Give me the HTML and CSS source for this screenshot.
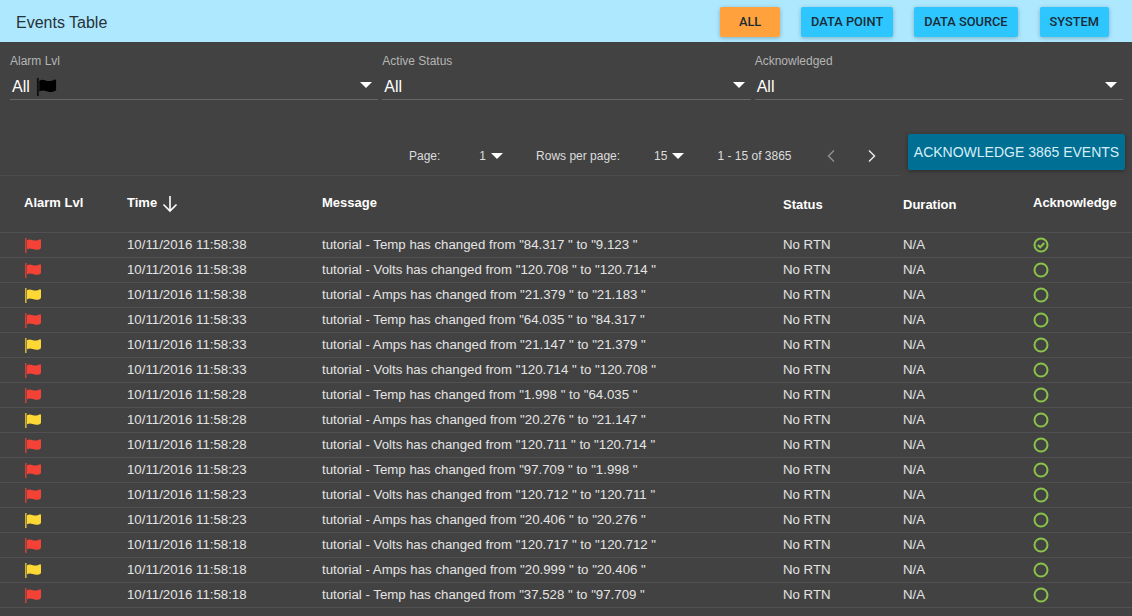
FILE: index.html
```html
<!DOCTYPE html>
<html lang="en">
<head>
    <meta charset="UTF-8">
    <title>Events Table</title>
    <link rel="stylesheet" href="styles.css">
</head>
<body>

    <svg class="icon-defs" width="0" height="0">
        <symbol id="flag" viewBox="0 0 16 15">
            <path opacity="0.75" d="M0 0h1.600v15H0z"/>
            <path d="M2 2.200c1.800 -.9 3.300 -.9 5.200 -.2 2.400 .9 4.200 .8 7.300 -.6 .9 -.4 1.500 0 1.500 .8v7.400c0 .7 -.3 1 -.9 1.300 -2.800 1.200 -4.800 1.100 -7.300 .2 -2 -.8 -3.800 -.8 -5.800 .1z"/>
        </symbol>
    </svg>

    <!-- Top bar -->
    <header class="topbar">
        <h1>Events Table</h1>
        <nav class="type-buttons">
            <button class="type-btn type-all">ALL</button>
            <button class="type-btn">DATA POINT</button>
            <button class="type-btn">DATA SOURCE</button>
            <button class="type-btn type-system">SYSTEM</button>
        </nav>
    </header>

    <!-- Filters -->
    <section class="filters">
        <div class="filter">
            <label>Alarm Lvl</label>
            <div class="select">
                <span>All</span>
                <svg class="filter-flag"><use href="#flag"/></svg>
                <i class="caret"></i>
            </div>
        </div>
        <div class="filter">
            <label>Active Status</label>
            <div class="select"><span>All</span><i class="caret"></i></div>
        </div>
        <div class="filter">
            <label>Acknowledged</label>
            <div class="select"><span>All</span><i class="caret"></i></div>
        </div>
    </section>

    <!-- Pagination -->
    <section class="pager-row">
        <div class="pager">
            <span class="pager-page">Page:</span>
            <span class="pager-num">1</span><i class="caret small"></i>
            <span class="pager-rows">Rows per page:</span>
            <span class="pager-num">15</span><i class="caret small"></i>
            <span class="pager-range">1 - 15 of 3865</span>
            <svg class="chevron prev" viewBox="0 0 10 14"><path d="M8 1.500 2.500 7 8 12.500"/></svg>
            <svg class="chevron" viewBox="0 0 10 14"><path d="M2 1.500 7.500 7 2 12.500"/></svg>
        </div>
        <button class="ack-all">ACKNOWLEDGE 3865 EVENTS</button>
    </section>

    <!-- Events table -->
    <table class="events">
        <thead>
            <tr>
                <th class="col-alarm">Alarm Lvl</th>
                <th class="col-time">
                    <span class="time-head">Time
                        <svg class="sort-arrow" viewBox="0 0 16 18"><path d="M8 1v15M1.500 9.500 8 16l6.500-6.500"/></svg>
                    </span>
                </th>
                <th class="col-message">Message</th>
                <th class="col-status th-low">Status</th>
                <th class="col-duration th-low">Duration</th>
                <th class="col-ack">Acknowledge</th>
            </tr>
        </thead>
        <tbody id="eventRows"></tbody>
    </table>

    <script>
        const events = [
            ['red', '38', 'Temp', '84.317', '9.123', true],
            ['red', '38', 'Volts', '120.708', '120.714'],
            ['yellow', '38', 'Amps', '21.379', '21.183'],
            ['red', '33', 'Temp', '64.035', '84.317'],
            ['yellow', '33', 'Amps', '21.147', '21.379'],
            ['red', '33', 'Volts', '120.714', '120.708'],
            ['red', '28', 'Temp', '1.998', '64.035'],
            ['yellow', '28', 'Amps', '20.276', '21.147'],
            ['red', '28', 'Volts', '120.711', '120.714'],
            ['red', '23', 'Temp', '97.709', '1.998'],
            ['red', '23', 'Volts', '120.712', '120.711'],
            ['yellow', '23', 'Amps', '20.406', '20.276'],
            ['red', '18', 'Volts', '120.717', '120.712'],
            ['yellow', '18', 'Amps', '20.999', '20.406'],
            ['red', '18', 'Temp', '37.528', '97.709']
        ];

        const rows = events.map(([level, sec, name, from, to, acked]) => `
            <tr>
                <td><svg class="flag flag-${level}"><use href="#flag"/></svg></td>
                <td>10/11/2016 11:58:${sec}</td>
                <td>tutorial - ${name} has changed from "${from} " to "${to} "</td>
                <td>No RTN</td>
                <td>N/A</td>
                <td>
                    <svg class="ack" viewBox="0 0 16 16">
                        <circle cx="8" cy="8" r="6.500"/>
                        ${acked ? '<path class="tick" d="M4.800 8 7.200 10.300 11.300 6"/>' : ''}
                    </svg>
                </td>
            </tr>`);
        document.getElementById('eventRows').innerHTML = rows.join('');
    </script>

</body>
</html>
```

FILE: styles.css
```css
/* General */
body {
    margin: 0;
    height: 616px;
    overflow: hidden;
    background-color: #424242;
    color: #fff;
    font-family: "Liberation Sans", Arial, sans-serif;
}

.icon-defs {
    position: absolute;
}

/* Top bar */
.topbar {
    display: flex;
    align-items: flex-start;
    justify-content: space-between;
    height: 42px;
    padding: 0 23px 0 16px;
    background-color: #aee8ff;
}

.topbar h1 {
    margin: 0;
    font-size: 16px;
    font-weight: 400;
    line-height: 45px;
    color: #263238;
}

.type-buttons {
    display: flex;
    gap: 21px;
    padding-top: 7px;
}

.type-btn {
    height: 30px;
    padding: 0 10px 2px;
    border: none;
    border-radius: 2px;
    background-color: #2ec6ff;
    color: #1a2b36;
    font-family: Roboto, sans-serif;
    font-size: 12.800px;
    font-weight: 500;
    box-shadow: 0 1px 4px rgba(0, 0, 0, 0.25);
}

.type-all {
    width: 60px;
    background-color: #ffa23e;
}

.type-system {
    margin-left: 1px;
}

/* Filters */
.filters {
    display: flex;
    gap: 4px;
    padding: 12px 9px 0 10px;
}

.filter {
    flex: 1;
}

.filter label {
    display: block;
    font-size: 12px;
    line-height: 14px;
    color: #b5b5b5;
}

.select {
    display: flex;
    align-items: center;
    height: 25px;
    padding: 6px 0 0 2px;
    border-bottom: 1px solid #666;
    font-size: 16px;
}

.filter-flag {
    width: 21px;
    height: 18px;
    margin-left: 6px;
    fill: #000;
}

.caret {
    display: inline-block;
    border-left: 6px solid transparent;
    border-right: 6px solid transparent;
    border-top: 6px solid #fff;
    margin-left: auto;
    margin-right: 6px;
    margin-top: -4px;
}

.caret.small {
    margin: 0 0 0 5px;
}

/* Pagination */
.pager-row {
    display: flex;
    align-items: flex-start;
    justify-content: space-between;
    height: 76px;
    padding: 34px 7px 0 0;
    box-sizing: border-box;
}

.pager {
    display: flex;
    align-items: center;
    width: 900px;
    height: 42px;
    padding: 2px 0 0 409px;
    box-sizing: border-box;
    border-bottom: 1px solid #4d4d4d;
    font-size: 12px;
    color: #ddd;
}

.pager-num {
    margin-left: 39px;
}

.pager-rows {
    margin-left: 33px;
}

.pager-rows + .pager-num {
    margin-left: 34px;
}

.pager-range {
    margin-left: 33px;
}

.chevron {
    width: 10px;
    height: 14px;
    margin-left: 31px;
    fill: none;
    stroke: #e6e6e6;
    stroke-width: 1.500;
}

.chevron.prev {
    margin-left: 34px;
    stroke: #8f8f8f;
}

.ack-all {
    width: 217px;
    height: 36px;
    padding: 0;
    border: none;
    border-radius: 2px;
    background-color: #006f94;
    color: #d8eef6;
    font-family: "Liberation Sans", Arial, sans-serif;
    font-size: 14px;
    box-shadow: 0 1px 4px rgba(0, 0, 0, 0.35);
}

/* Table */
.events {
    width: 1132px;
    table-layout: fixed;
    border-collapse: collapse;
    font-size: 13.250px;
    color: #e4e4e4;
}

.events th {
    height: 56px;
    padding: 0 0 3px;
    box-sizing: border-box;
    border-bottom: 1px solid #515151;
    text-align: left;
    font-size: 13px;
    font-weight: 700;
    color: #fff;
}

.events th.th-low {
    padding: 1px 0 0;
}

.col-alarm { width: 127px; padding-left: 24px !important; }
.col-time { width: 195px; }
.col-message { width: 461px; }
.col-status { width: 120px; }
.col-duration { width: 130px; }

.time-head {
    display: inline-flex;
    align-items: center;
    gap: 5px;
}

.sort-arrow {
    width: 16px;
    height: 18px;
    margin-bottom: -3px;
    fill: none;
    stroke: #fff;
    stroke-width: 1.600;
}

.events td {
    height: 25px;
    padding: 0;
    box-sizing: border-box;
    border-bottom: 1px solid #515151;
}

.events td:first-child {
    padding-left: 25px;
}

.flag {
    display: block;
    width: 16px;
    height: 15px;
    margin-top: 1px;
}

.flag-red {
    fill: #f44336;
}

.flag-yellow {
    fill: #fdd835;
}

.ack {
    display: block;
    width: 16px;
    height: 16px;
    margin-top: 1px;
    fill: none;
    stroke: #8bc34a;
    stroke-width: 2;
}

.ack .tick {
    stroke-width: 2;
}
```
